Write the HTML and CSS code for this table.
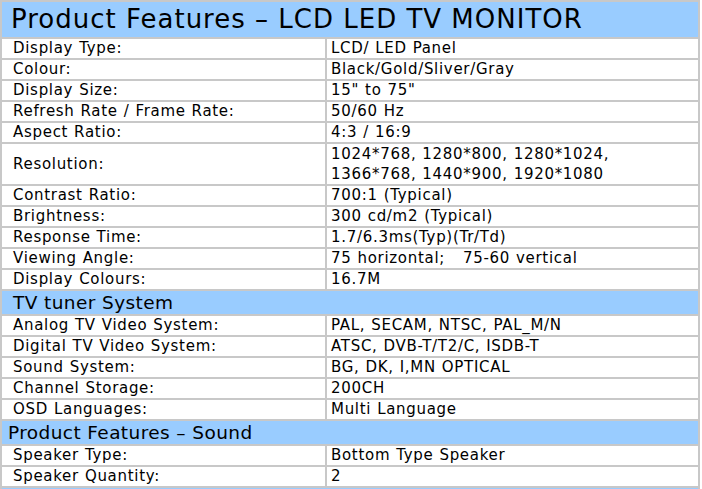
FILE: index.html
```html
<!DOCTYPE html>
<html>
<head>
<meta charset="utf-8">
<link rel="stylesheet" href="styles.css">
</head>
<body>
<table class="spec">
  <colgroup><col class="c-label"><col class="c-value"></colgroup>
  <tr class="title"><td colspan="2">Product Features – LCD LED TV MONITOR</td></tr>
  <tr><td class="label">Display Type:</td><td class="value">LCD/ LED Panel</td></tr>
  <tr><td class="label">Colour:</td><td class="value">Black/Gold/Sliver/Gray</td></tr>
  <tr><td class="label">Display Size:</td><td class="value">15" to 75"</td></tr>
  <tr><td class="label">Refresh Rate / Frame Rate:</td><td class="value">50/60 Hz</td></tr>
  <tr><td class="label">Aspect Ratio:</td><td class="value">4:3 / 16:9</td></tr>
  <tr class="double"><td class="label">Resolution:</td><td class="value">1024*768, 1280*800, 1280*1024,<br>1366*768, 1440*900, 1920*1080</td></tr>
  <tr><td class="label">Contrast Ratio:</td><td class="value">700:1 (Typical)</td></tr>
  <tr><td class="label">Brightness:</td><td class="value">300 cd/m2 (Typical)</td></tr>
  <tr><td class="label">Response Time:</td><td class="value">1.7/6.3ms(Typ)(Tr/Td)</td></tr>
  <tr><td class="label">Viewing Angle:</td><td class="value">75 horizontal;&nbsp;&nbsp; 75-60 vertical</td></tr>
  <tr><td class="label">Display Colours:</td><td class="value">16.7M</td></tr>
  <tr class="section"><td colspan="2" class="sec-tv">TV tuner System</td></tr>
  <tr><td class="label">Analog TV Video System:</td><td class="value">PAL, SECAM, NTSC, PAL_M/N</td></tr>
  <tr><td class="label">Digital TV Video System:</td><td class="value">ATSC, DVB-T/T2/C, ISDB-T</td></tr>
  <tr><td class="label">Sound System:</td><td class="value">BG, DK, I,MN OPTICAL</td></tr>
  <tr><td class="label">Channel Storage:</td><td class="value">200CH</td></tr>
  <tr><td class="label">OSD Languages:</td><td class="value">Multi Language</td></tr>
  <tr class="section"><td colspan="2" class="sec-sound">Product Features – Sound</td></tr>
  <tr><td class="label">Speaker Type:</td><td class="value">Bottom Type Speaker</td></tr>
  <tr><td class="label">Speaker Quantity:</td><td class="value">2</td></tr>
  <tr class="section"><td colspan="2">&nbsp;</td></tr>
</table>
</body>
</html>
```
FILE: styles.css
```css
html, body {
  margin: 0;
  padding: 0;
  background: #ffffff;
}
.spec {
  border-collapse: collapse;
  width: 700px;
  font-family: "DejaVu Sans", Verdana, sans-serif;
  color: #000000;
  table-layout: fixed;
}
.c-label { width: 325px; }
.spec td {
  border: 2px solid #c8c8c8;
  padding: 0;
  vertical-align: middle;
  height: 19px;
  font-size: 15px;
  line-height: 19px;
  letter-spacing: 0.7px;
  word-spacing: 0.5px;
}
.spec td.label { padding-left: 11px; }
.spec td.value { padding-left: 4px; }
.spec .double td { height: 40px; line-height: 20px; }
.spec .title td {
  background: #99ccff;
  height: 35px;
  font-size: 26px;
  line-height: 35px;
  letter-spacing: 1px;
  word-spacing: 0;
  padding-left: 9px;
}
.spec .section td {
  background: #99ccff;
  height: 23px;
  font-size: 18.5px;
  line-height: 23px;
  letter-spacing: 0.4px;
  word-spacing: 0;
}
.spec td.sec-tv { padding-left: 11px; }
.spec td.sec-sound { padding-left: 6px; }
```
